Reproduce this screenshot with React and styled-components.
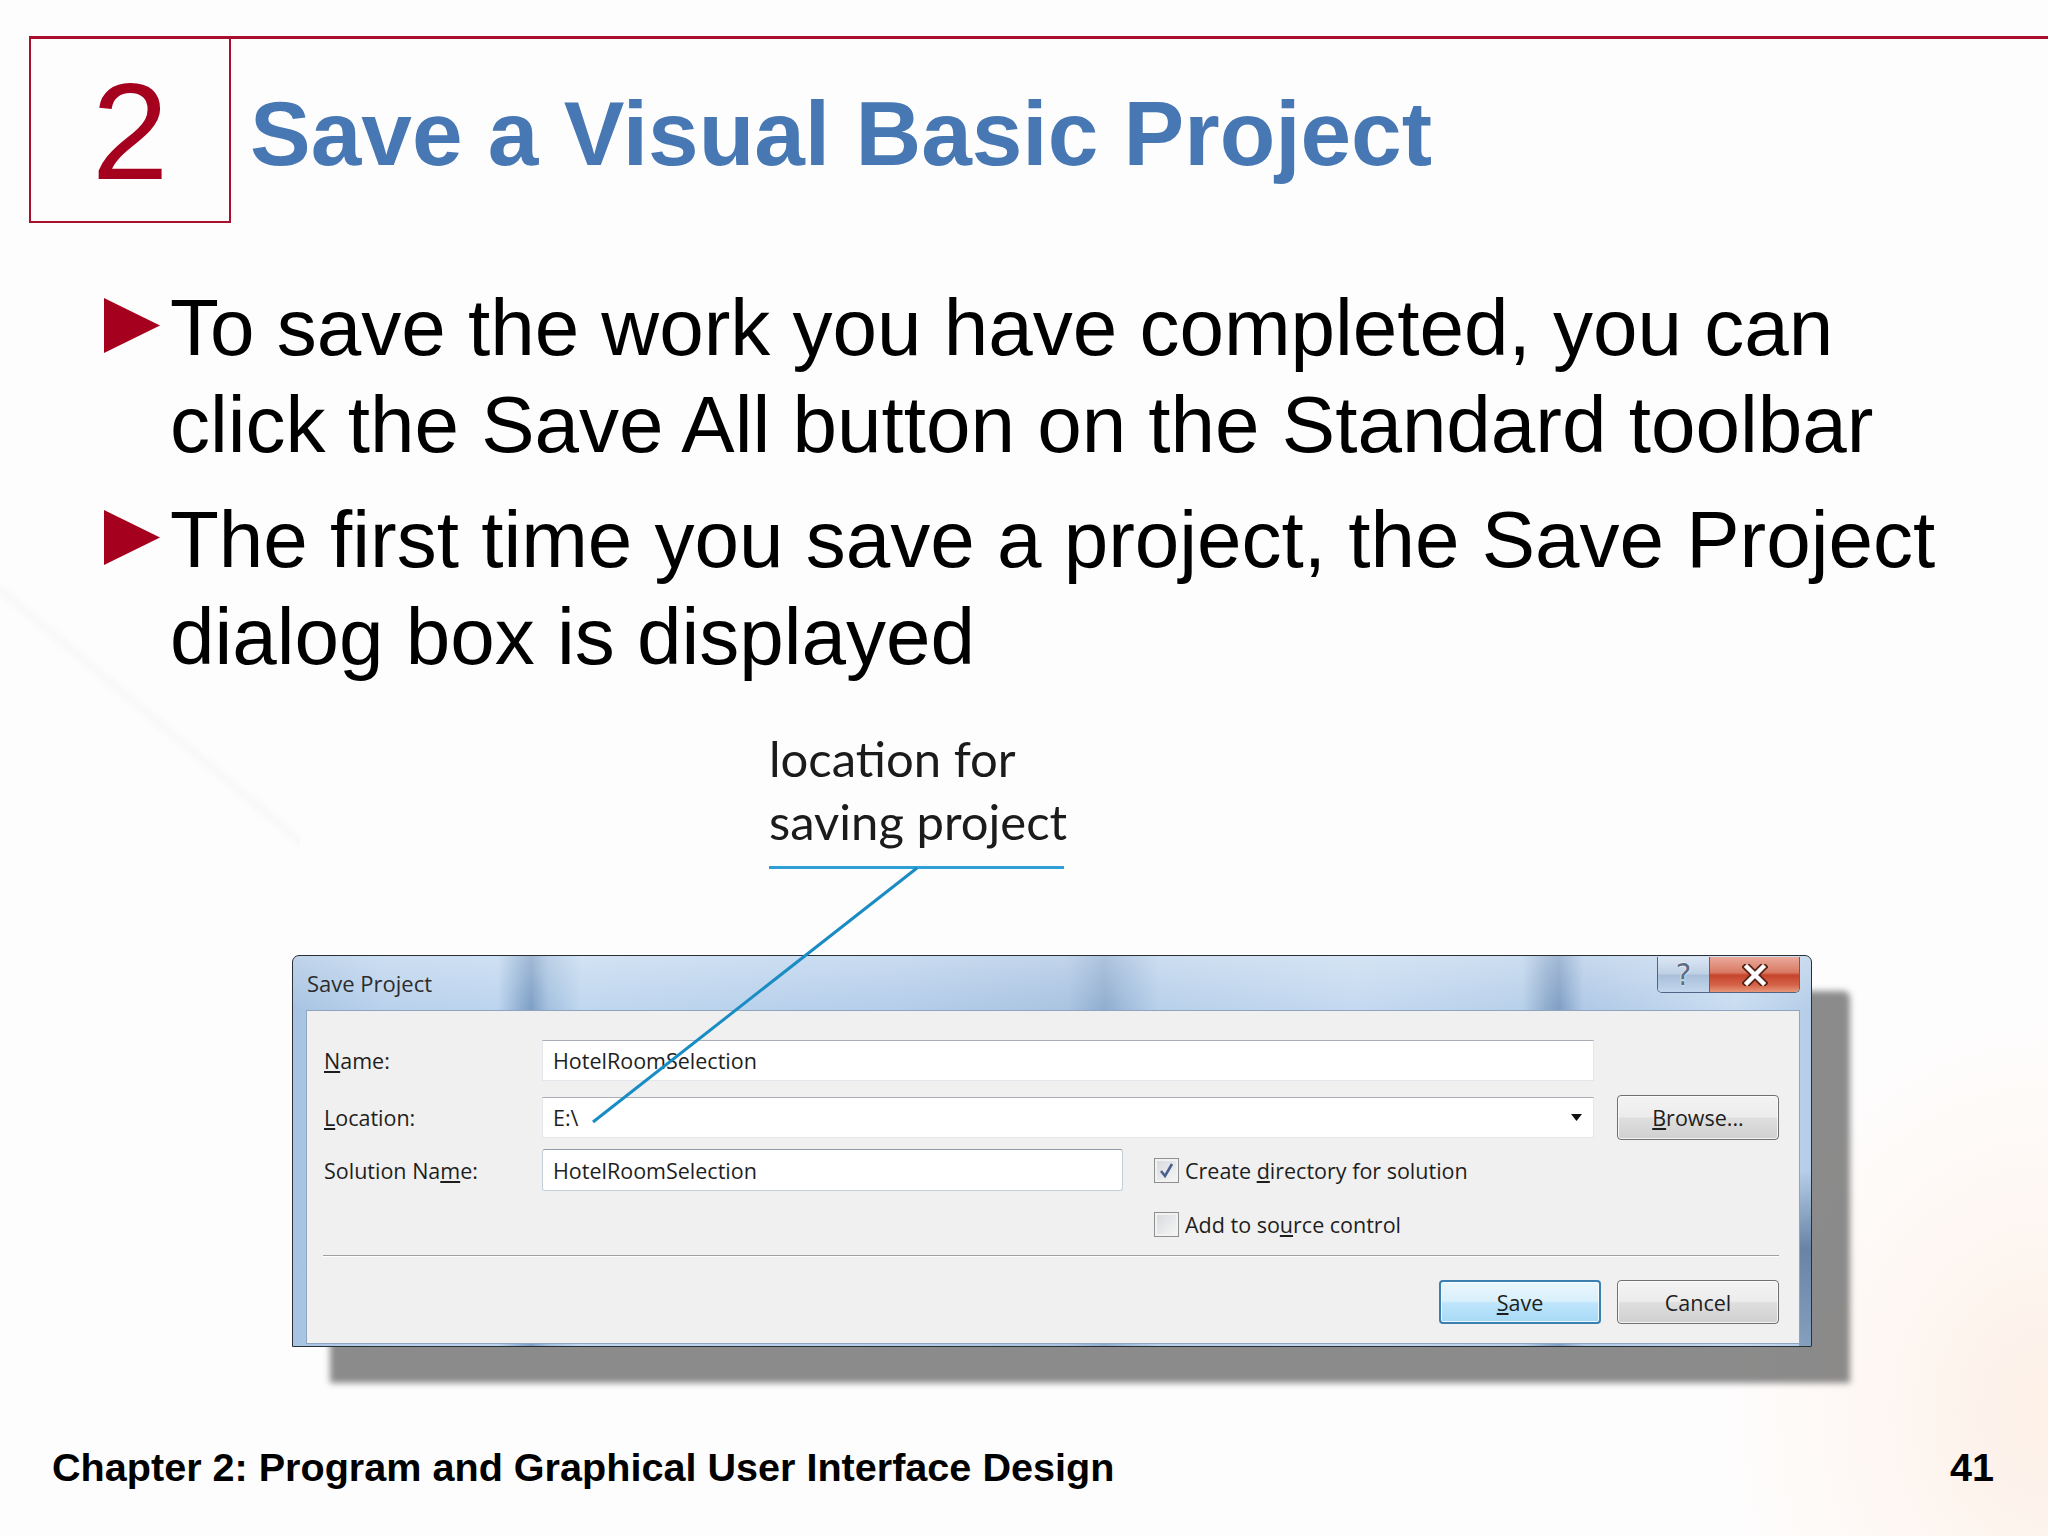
import React from 'react'
import styled, { createGlobalStyle, css } from 'styled-components'

const GlobalStyle = createGlobalStyle`
  html, body {
    margin: 0;
    padding: 0;
    background: #fff;
  }
  body {
    font-family: "Liberation Sans", Arial, sans-serif;
  }
`

const Page = styled.div`
  position: relative;
  width: 2048px;
  height: 1536px;
  overflow: hidden;
  box-sizing: border-box;
  padding-top: 36px;
  background:
    radial-gradient(ellipse 460px 560px at 100% 92%, rgba(252, 222, 200, 0.42), rgba(255, 255, 255, 0) 70%),
    linear-gradient(40deg, rgba(255, 255, 255, 0) 47%, rgba(236, 236, 236, 0.28) 49%, rgba(255, 255, 255, 0) 51%) 0 560px / 300px 300px no-repeat,
    #fefdfd;
`

const Header = styled.header`
  display: flex;
  align-items: flex-start;
  margin-left: 29px;
  border-top: 3px solid #a8102d;
`

const NumberBox = styled.div`
  box-sizing: border-box;
  width: 202px;
  height: 184px;
  border: 2px solid #a8102d;
  border-top: none;
  display: flex;
  justify-content: center;
  padding-top: 13px;
  font-size: 138px;
  line-height: normal;
  color: #a5001e;
`

const Title = styled.h1`
  margin: 0 0 0 19px;
  padding-top: 43px;
  font-size: 91px;
  line-height: 104px;
  font-weight: bold;
  color: #4778b4;
  white-space: nowrap;
`

const BulletList = styled.ul`
  list-style: none;
  margin: 56px 0 0 104px;
  padding: 0;
`

const BulletItem = styled.li`
  display: flex;
  align-items: flex-start;
  font-size: 80px;
  line-height: 97px;
  color: #000;
  & + & {
    margin-top: 18px;
  }
`

const Arrow = styled.svg`
  flex: none;
  width: 56px;
  height: 55px;
  margin: 19px 10px 0 0;
`

const BulletText = styled.span`
  width: 1790px;
`

const Figure = styled.section`
  margin-top: 42px;
`

const Callout = styled.div`
  margin-left: 769px;
  width: 295px;
  padding-bottom: 13px;
  border-bottom: 3px solid #2d9fd5;
  font-family: Lato, "Open Sans", sans-serif;
  font-size: 49px;
  line-height: 63px;
  color: #1b1b1b;
  white-space: nowrap;
`

const Window = styled.div`
  box-sizing: border-box;
  width: 1520px;
  height: 392px;
  margin: 86px 0 0 292px;
  display: flex;
  flex-direction: column;
  border: 1px solid #2b2f36;
  border-radius: 7px 7px 0 0;
  font-family: "Open Sans", sans-serif;
  font-size: 21.5px;
  color: #1e1e1e;
  box-shadow: 38px 36px 6px rgba(110, 110, 110, 0.8);
  background:
    linear-gradient(to bottom, rgba(255, 255, 255, 0) 55%, rgba(40, 70, 110, 0.55) 75%, rgba(40, 70, 110, 0.35) 100%) right top / 12px 100% no-repeat,
    linear-gradient(to bottom, rgba(255, 255, 255, 0.28), rgba(255, 255, 255, 0) 14%),
    linear-gradient(to right,
      #a7c3e2 0%, #b9d1ec 6%, #bcd4ee 13.5%, #8eaed2 15%, #7d9ec4 15.7%,
      #a3c0df 16.8%, #c0d7ef 19%, #b4cdea 40%, #a9c3e1 51%, #8faccf 53.5%,
      #9fbbdb 54.8%, #b8d0ea 57%, #c4d9f0 70%, #b8d0ea 81%, #8eabcd 82.6%,
      #7f9ec4 83.4%, #b0c9e6 85%, #c8dcf1 95%, #b5cde8 100%);
`

const TitleBar = styled.div`
  height: 54px;
  flex: none;
  display: flex;
  align-items: flex-start;
  padding: 0 11px 0 14px;
`

const WindowTitle = styled.span`
  margin-top: 12px;
  line-height: 30px;
  font-size: 22px;
  color: #2c2c2c;
`

const Controls = styled.div`
  margin: 1px 0 0 auto;
  display: flex;
  height: 35px;
  border: 1px solid #4e6583;
  border-top: none;
  border-radius: 0 0 5px 5px;
  overflow: hidden;
`

const HelpButton = styled.div`
  width: 51px;
  display: flex;
  align-items: center;
  justify-content: center;
  border-right: 1px solid #4e6583;
  background: linear-gradient(#dbe6f3 0%, #bfd1e6 48%, #a9bfd9 52%, #c3d6ec 100%);
  font-family: "DejaVu Sans", sans-serif;
  font-size: 30px;
  line-height: 1;
  color: #5d6d84;
  text-shadow: 0 0 2px #fff, 0 0 1px #fff;
`

const CloseButton = styled.div`
  width: 89px;
  display: flex;
  align-items: center;
  justify-content: center;
  background: linear-gradient(#eaaa9c 0%, #d97a64 44%, #c6442b 52%, #d4634a 80%, #e89878 100%);
`

const Client = styled.div`
  flex: 1;
  margin: 0 11px 2px 13px;
  padding: 29px 20px 0 17px;
  border: 1px solid #8ea4bf;
  background: #f0f0f0;
  display: flex;
  flex-direction: column;
`

const Row = styled.div`
  display: flex;
  align-items: center;
  height: ${p => p.$h}px;
  margin-top: ${p => p.$mt || 0}px;
  padding-left: ${p => p.$indent || 0}px;
  flex: none;
`

const Label = styled.span`
  width: 218px;
  flex: none;
`

const Field = styled.div`
  box-sizing: border-box;
  width: ${p => p.$w}px;
  height: ${p => p.$h}px;
  flex: none;
  display: flex;
  align-items: center;
  justify-content: space-between;
  padding: 0 11px 0 10px;
  background: #fff;
  border: 1px solid #e3e5ea;
  border-top-color: #a9aeb6;
  ${p => p.$boxed && css`
    border: 1px solid #c5cfdb;
    border-top-color: #8f9aa8;
    border-radius: 3px;
  `}
`

const DropArrow = styled.svg`
  width: 11px;
  height: 7px;
`

const Button = styled.button`
  box-sizing: border-box;
  width: 162px;
  height: ${p => p.$h || 44}px;
  flex: none;
  margin-left: ${p => p.$ml || 0}px;
  padding: 0;
  border: 1px solid #707070;
  border-radius: 4px;
  background: linear-gradient(#f3f3f3 0%, #ececec 48%, #dedede 52%, #d0d0d0 100%);
  box-shadow: inset 0 0 0 1px rgba(255, 255, 255, 0.75);
  font-family: "Open Sans", sans-serif;
  font-size: 21.5px;
  color: #1e1e1e;
  ${p => p.$default && css`
    border: 2px solid #3c7fb1;
    background: linear-gradient(#eaf6fd 0%, #d9f0fc 48%, #bee6fd 52%, #a7d9f5 100%);
  `}
`

const CheckBox = styled.span`
  box-sizing: border-box;
  width: 25px;
  height: 25px;
  flex: none;
  margin-left: ${p => p.$ml || 0}px;
  display: flex;
  align-items: center;
  justify-content: center;
  border: 1px solid #8e8f8f;
  background: linear-gradient(135deg, #d6d8dc, #f7f7f7);
  box-shadow: inset 0 0 0 2px #f2f2f2;
`

const CheckLabel = styled.span`
  margin-left: 6px;
`

const Separator = styled.div`
  height: 1px;
  margin: 18px 0 0 -1px;
  background: #a0a0a0;
  border-bottom: 1px solid #fff;
  flex: none;
`

const ButtonRow = styled.div`
  display: flex;
  justify-content: flex-end;
  gap: 16px;
  margin-top: 23px;
`

const LeaderLine = styled.svg`
  position: absolute;
  left: 0;
  top: 0;
  width: 2048px;
  height: 1536px;
  pointer-events: none;
`

const Footer = styled.footer`
  display: flex;
  justify-content: space-between;
  margin-top: 97px;
  padding: 0 54px 0 52px;
  font-size: 39.6px;
  line-height: 46px;
  font-weight: bold;
  color: #000;
`

const BulletArrow = () => (
  <Arrow viewBox="0 0 56 55">
    <polygon points="0,0 56,27.5 0,55" fill="#a5001e" />
  </Arrow>
)

export default function App() {
  return (
    <Page>
      <GlobalStyle />
      <Header>
        <NumberBox>2</NumberBox>
        <Title>Save a Visual Basic Project</Title>
      </Header>

      <BulletList>
        <BulletItem>
          <BulletArrow />
          <BulletText>
            To save the work you have completed, you can click the Save All button on the Standard toolbar
          </BulletText>
        </BulletItem>
        <BulletItem>
          <BulletArrow />
          <BulletText>
            The first time you save a project, the Save Project dialog box is displayed
          </BulletText>
        </BulletItem>
      </BulletList>

      <Figure>
        <Callout>
          location for
          <br />
          saving project
        </Callout>

        <Window>
          <TitleBar>
            <WindowTitle>Save Project</WindowTitle>
            <Controls>
              <HelpButton>?</HelpButton>
              <CloseButton>
                <svg width="26" height="22" viewBox="0 0 26 22">
                  <path d="M5 3 L21 19 M21 3 L5 19" stroke="#5a2418" strokeWidth="8" strokeLinecap="square" />
                  <path d="M5 3 L21 19 M21 3 L5 19" stroke="#fff" strokeWidth="4.5" strokeLinecap="square" />
                </svg>
              </CloseButton>
            </Controls>
          </TitleBar>

          <Client>
            <Row $h={41}>
              <Label><u>N</u>ame:</Label>
              <Field $w={1052} $h={41}>HotelRoomSelection</Field>
            </Row>
            <Row $h={45} $mt={14}>
              <Label><u>L</u>ocation:</Label>
              <Field $w={1052} $h={41}>
                <span>E:\</span>
                <DropArrow viewBox="0 0 11 7">
                  <polygon points="0,0 11,0 5.5,7" fill="#111" />
                </DropArrow>
              </Field>
              <Button $h={45} $ml={23}><u>B</u>rowse...</Button>
            </Row>
            <Row $h={42} $mt={9}>
              <Label>Solution Na<u>m</u>e:</Label>
              <Field $w={581} $h={42} $boxed>HotelRoomSelection</Field>
              <CheckBox $ml={31}>
                <svg width="17" height="17" viewBox="0 0 17 17">
                  <path d="M3 9 L7 14 L14 2" stroke="#4a6190" strokeWidth="2.6" fill="none" />
                </svg>
              </CheckBox>
              <CheckLabel>Create <u>d</u>irectory for solution</CheckLabel>
            </Row>
            <Row $h={25} $mt={21} $indent={830}>
              <CheckBox />
              <CheckLabel>Add to so<u>u</u>rce control</CheckLabel>
            </Row>
            <Separator />
            <ButtonRow>
              <Button $default><u>S</u>ave</Button>
              <Button>Cancel</Button>
            </ButtonRow>
          </Client>
        </Window>
      </Figure>

      <Footer>
        <span>Chapter 2: Program and Graphical User Interface Design</span>
        <span>41</span>
      </Footer>

      <LeaderLine viewBox="0 0 2048 1536">
        <line x1="917" y1="868" x2="593" y2="1122" stroke="#1a8cc4" strokeWidth="3" />
      </LeaderLine>
    </Page>
  )
}
